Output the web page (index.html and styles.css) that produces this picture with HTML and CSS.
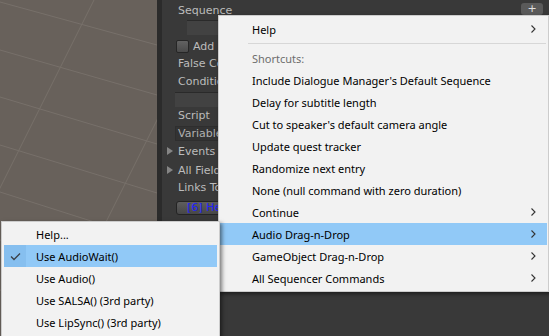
FILE: index.html
```html
<!DOCTYPE html>
<html>
<head>
    <title>Sequence Menu</title>
    <link rel="stylesheet" href="styles.css">
</head>
<body>
    <div class="editor">
        <div class="scene">
            <svg class="grid" width="157" height="336" viewBox="0 0 157 336">
                <line x1="0" y1="2" x2="157" y2="45"/>
                <line x1="0" y1="50" x2="157" y2="95"/>
                <line x1="0" y1="97" x2="157" y2="144"/>
                <line x1="0" y1="145" x2="157" y2="193"/>
                <line x1="0" y1="192" x2="157" y2="242"/>
                <line x1="0" y1="240" x2="157" y2="292"/>
                <line x1="0" y1="290" x2="157" y2="344"/>
                <line x1="94" y1="0" x2="-74" y2="336"/>
                <line x1="217" y1="0" x2="49" y2="336"/>
            </svg>
        </div>
        <div class="divider"></div>
        <div class="inspector">
            <div class="label-row">
                <span class="label">Sequence</span>
                <span class="plus-btn">+</span>
            </div>
            <div class="field seq-field"></div>
            <div class="check-row">
                <span class="checkbox"></span>
                <span>Add Default Sequence Commands</span>
            </div>
            <div class="row">False Condition Action</div>
            <div class="row">Conditions</div>
            <div class="field"></div>
            <div class="row">Script</div>
            <div class="field var-field">Variables...</div>
            <div class="fold-row"><span class="tri"></span>Events</div>
            <div class="fold-row"><span class="tri"></span>All Fields</div>
            <div class="row">Links To:</div>
            <div class="link-btn">[6] Hello there</div>
        </div>
    </div>

    <div class="menu main-menu">
        <div class="item"><span class="gutter"></span><span class="text">Help</span><span class="arrow"><svg width="5" height="8" viewBox="0 0 5 8"><polyline points="0.5,0.5 4,4 0.5,7.5" fill="none" stroke="#333" stroke-width="1.1"/></svg></span></div>
        <div class="separator"><span class="sep-line"></span></div>
        <div class="item disabled"><span class="gutter"></span><span class="text">Shortcuts:</span></div>
        <div class="item"><span class="gutter"></span><span class="text">Include Dialogue Manager's Default Sequence</span></div>
        <div class="item"><span class="gutter"></span><span class="text">Delay for subtitle length</span></div>
        <div class="item"><span class="gutter"></span><span class="text">Cut to speaker's default camera angle</span></div>
        <div class="item"><span class="gutter"></span><span class="text">Update quest tracker</span></div>
        <div class="item"><span class="gutter"></span><span class="text">Randomize next entry</span></div>
        <div class="item"><span class="gutter"></span><span class="text">None (null command with zero duration)</span></div>
        <div class="item"><span class="gutter"></span><span class="text">Continue</span><span class="arrow"><svg width="5" height="8" viewBox="0 0 5 8"><polyline points="0.5,0.5 4,4 0.5,7.5" fill="none" stroke="#333" stroke-width="1.1"/></svg></span></div>
        <div class="item hot"><span class="gutter"></span><span class="text">Audio Drag-n-Drop</span><span class="arrow"><svg width="5" height="8" viewBox="0 0 5 8"><polyline points="0.5,0.5 4,4 0.5,7.5" fill="none" stroke="#333" stroke-width="1.1"/></svg></span></div>
        <div class="item"><span class="gutter"></span><span class="text">GameObject Drag-n-Drop</span><span class="arrow"><svg width="5" height="8" viewBox="0 0 5 8"><polyline points="0.5,0.5 4,4 0.5,7.5" fill="none" stroke="#333" stroke-width="1.1"/></svg></span></div>
        <div class="item"><span class="gutter"></span><span class="text">All Sequencer Commands</span><span class="arrow"><svg width="5" height="8" viewBox="0 0 5 8"><polyline points="0.5,0.5 4,4 0.5,7.5" fill="none" stroke="#333" stroke-width="1.1"/></svg></span></div>
    </div>

    <div class="menu sub-menu">
        <div class="item"><span class="gutter"></span><span class="text">Help...</span></div>
        <div class="item hot"><span class="gutter"><span class="check-box"><svg width="11" height="9" viewBox="0 0 11 9"><polyline points="1,4.5 4,7.5 10,1.5" fill="none" stroke="#3a3f47" stroke-width="1.3"/></svg></span></span><span class="text">Use AudioWait()</span></div>
        <div class="item"><span class="gutter"></span><span class="text">Use Audio()</span></div>
        <div class="item"><span class="gutter"></span><span class="text">Use SALSA() (3rd party)</span></div>
        <div class="item"><span class="gutter"></span><span class="text">Use LipSync() (3rd party)</span></div>
    </div>
</body>
</html>
```

FILE: styles.css
```css
body { margin: 0; width: 549px; height: 336px; overflow: hidden; position: relative; background: #393939; }

/* editor background */
.editor { display: flex; height: 336px; }
.scene { width: 157px; flex: none; background: #68615b; }
.grid line { stroke: #77706a; stroke-width: 1; }
.divider { width: 5px; flex: none; background: #2b2b2b; }
.inspector { flex: 1; min-width: 0; padding-left: 13px; font-family: "DejaVu Sans", sans-serif; font-size: 11px; color: #bcbcbc; white-space: nowrap; overflow: hidden; }

.label-row { display: flex; justify-content: space-between; align-items: center; height: 18px; padding-top: 1px; padding-left: 3px; }
.plus-btn { width: 22px; height: 12px; margin-right: 6px; margin-top: -3px; background: #5a5a5a; border-radius: 3px; color: #e0e0e0; font-size: 11px; line-height: 11px; text-align: center; }
.row { height: 18px; line-height: 18px; padding-left: 3px; }
.field { height: 14px; background: #424242; border-top: 1px solid #2a2a2a; margin-top: 1px; }
.seq-field { margin-top: 1px; margin-left: 12px; }
.var-field { background: #333333; border: 1px solid #2e2e2e; height: 13px; line-height: 13px; padding-left: 2px; color: #b0b0b0; }
.check-row { display: flex; align-items: center; gap: 4px; height: 17px; margin-top: 3px; padding-left: 1px; }
.checkbox { width: 11px; height: 11px; border: 1px solid #262626; border-radius: 2px; background: linear-gradient(#626262, #4a4a4a); }
.fold-row { display: flex; align-items: center; height: 18px; margin-top: 1px; margin-left: -8px; }
.tri { width: 0; height: 0; border-left: 6px solid #858585; border-top: 4px solid transparent; border-bottom: 4px solid transparent; margin-right: 5px; }
.link-btn { width: 340px; height: 12px; line-height: 12px; margin-top: 4px; margin-left: 1px; padding-left: 10px; border: 1px solid #242424; border-radius: 3px; background: linear-gradient(#5e5e5e, #474747); color: #2222ff; }

/* popup menus */
.menu { position: absolute; background: #f2f2f2; border: 1px solid #cccccc; box-shadow: 2px 2px 4px rgba(0, 0, 0, 0.5); font-family: "Noto Sans", sans-serif; font-size: 11px; color: #000; }
.main-menu { left: 218px; top: 15px; width: 329px; padding: 2px 0; }
.sub-menu { left: 1px; top: 221px; width: 217px; padding: 1px 0 4px; z-index: 2; }
.item { display: flex; align-items: center; height: 22px; margin: 0 1px; padding-right: 11px; }
.sub-menu .item { margin: 0 2px; }
.item.hot { background: #91c9f7; }
.item.disabled { color: #6d6d6d; }
.gutter { width: 32px; height: 22px; flex: none; display: flex; align-items: center; }
.text { flex: 1; }
.arrow { display: flex; align-items: center; }
.check-box { width: 22px; height: 22px; display: flex; align-items: center; justify-content: center; background: #86bfef; }
.separator { padding: 3px 2px 3px 29px; }
.sep-line { display: block; height: 1px; background: #d7d7d7; }
```
